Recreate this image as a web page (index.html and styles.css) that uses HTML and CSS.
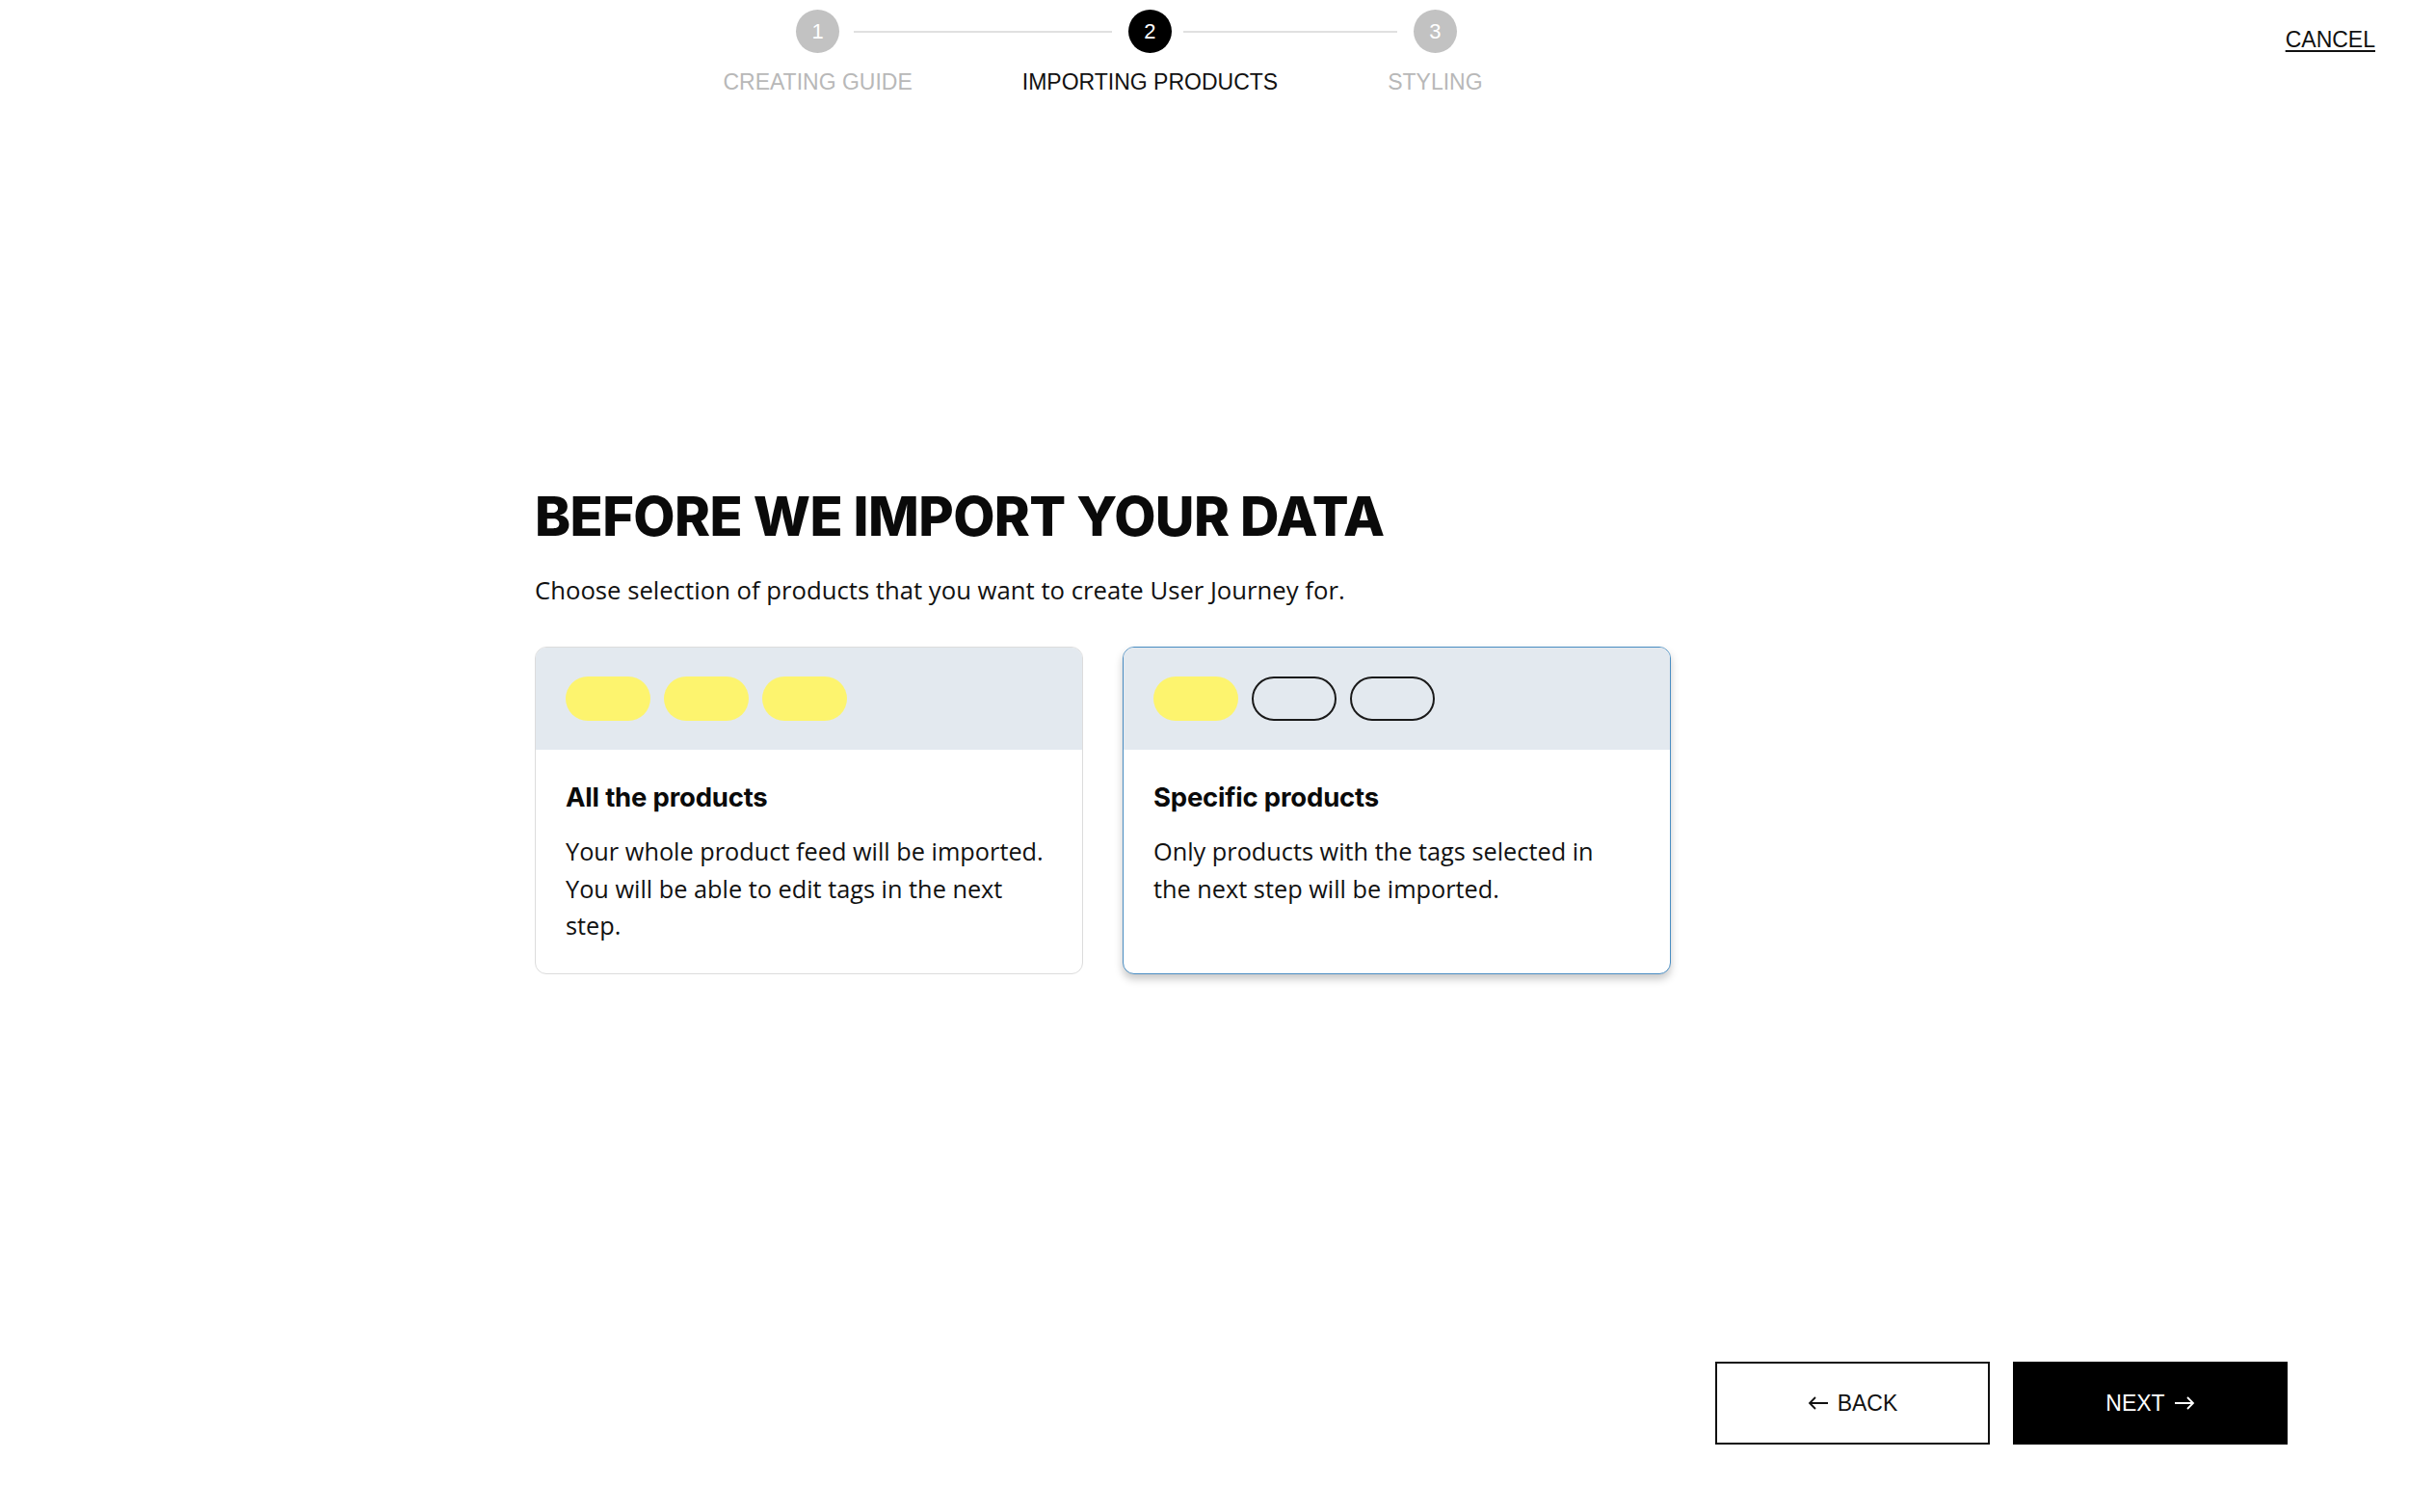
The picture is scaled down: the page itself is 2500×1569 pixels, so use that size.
FILE: index.html
```html
<!DOCTYPE html>
<html lang="en">
<head>
<meta charset="utf-8">
<title>Importing products</title>
<link rel="stylesheet" href="styles.css">
</head>
<body>
<header class="topbar">
  <div class="stepper-wrap">
    <ol class="stepper">
      <li class="step step--done">
        <span class="step-dot">1</span>
        <span class="step-label">CREATING GUIDE</span>
      </li>
      <li class="step step--active step--second">
        <span class="step-dot">2</span>
        <span class="step-label">IMPORTING PRODUCTS</span>
      </li>
      <li class="step step--third">
        <span class="step-dot">3</span>
        <span class="step-label">STYLING</span>
      </li>
    </ol>
  </div>
  <a class="cancel" href="#">CANCEL</a>
</header>

<main class="content">
  <h1 class="title">BEFORE WE IMPORT YOUR DATA</h1>
  <p class="subtitle">Choose selection of products that you want to create User Journey for.</p>
  <div class="options">
    <div class="option">
      <div class="option-head">
        <span class="pill pill--filled"></span>
        <span class="pill pill--filled"></span>
        <span class="pill pill--filled"></span>
      </div>
      <div class="option-body">
        <h2 class="option-title">All the products</h2>
        <p class="option-text">Your whole product feed will be imported. You will be able to edit tags in the next step.</p>
      </div>
    </div>
    <div class="option option--selected">
      <div class="option-head">
        <span class="pill pill--filled"></span>
        <span class="pill pill--outline"></span>
        <span class="pill pill--outline"></span>
      </div>
      <div class="option-body">
        <h2 class="option-title">Specific products</h2>
        <p class="option-text">Only products with the tags selected in the next step will be imported.</p>
      </div>
    </div>
  </div>
</main>

<footer class="actions">
  <button class="btn btn--ghost" type="button">
    <svg class="arrow" width="22" height="16" viewBox="0 0 22 16" aria-hidden="true"><path d="M21 8H2M8 2L2 8l6 6" fill="none" stroke="currentColor" stroke-width="1.8"/></svg>
    <span>BACK</span>
  </button>
  <button class="btn btn--solid" type="button">
    <span>NEXT</span>
    <svg class="arrow" width="22" height="16" viewBox="0 0 22 16" aria-hidden="true"><path d="M1 8h19M14 2l6 6-6 6" fill="none" stroke="currentColor" stroke-width="1.8"/></svg>
  </button>
</footer>
</body>
</html>
```

FILE: styles.css
```css
* { box-sizing: border-box; }

html, body { height: 100%; }

body {
  margin: 0;
  background: #ffffff;
  color: #111;
  font-family: "Liberation Sans", Arial, sans-serif;
  display: flex;
  flex-direction: column;
  min-height: 100vh;
}

/* ---------- top bar ---------- */
.topbar {
  display: flex;
  align-items: flex-start;
  padding-top: 10px;
}

.stepper-wrap {
  margin-left: 555px;
  width: 1179px;
  display: flex;
  justify-content: center;
}

.stepper {
  list-style: none;
  margin: 0;
  padding: 0;
  display: flex;
  gap: 114px;
}

.step {
  position: relative;
  display: flex;
  flex-direction: column;
  align-items: center;
}

.step-dot {
  position: relative;
  width: 45px;
  height: 45px;
  border-radius: 50%;
  background: #c2c2c2;
  color: #fff;
  font-size: 22px;
  display: flex;
  align-items: center;
  justify-content: center;
}

.step--active .step-dot { background: #000; }

.step--second .step-dot::before,
.step--third .step-dot::before {
  content: "";
  position: absolute;
  top: 22px;
  height: 2px;
  background: #e0e0e0;
  right: 62px;
}
.step--second .step-dot::before { width: 268px; }
.step--third .step-dot::before { width: 222px; }

.step-label {
  margin-top: 16px;
  font-size: 23px;
  line-height: 28px;
  color: #b8b8b8;
  white-space: nowrap;
}

.step--active .step-label { color: #111; }

.cancel {
  margin-left: auto;
  margin-right: 35px;
  margin-top: 17px;
  font-size: 23px;
  line-height: 28px;
  color: #111;
  text-decoration: underline;
  text-underline-offset: 3px;
}

/* ---------- content ---------- */
.content {
  margin-left: 555px;
  width: 1179px;
  padding-top: 409px;
}

.title {
  margin: 0;
  font-family: Inter, "Noto Sans", sans-serif;
  font-weight: 800;
  font-size: 56px;
  line-height: 56px;
  letter-spacing: -0.6px;
  color: #0a0a0a;
}

.subtitle {
  margin: 32px 0 0;
  font-family: "Open Sans", "Noto Sans", sans-serif;
  font-size: 25.7px;
  line-height: 34px;
  color: #111;
}

.options {
  margin-top: 41px;
  display: grid;
  grid-template-columns: 569px 569px;
  gap: 41px;
}

.option {
  border: 1.5px solid #dcdcdc;
  border-radius: 12px;
  overflow: hidden;
  background: #fff;
  display: flex;
  flex-direction: column;
}

.option--selected {
  border-color: #4a8dc2;
  box-shadow: 0 5px 8px rgba(0, 0, 0, 0.22);
}

.option-head {
  height: 106px;
  background: #e3e9ef;
  padding: 30px 0 0 31px;
  display: flex;
  gap: 14px;
}

.pill {
  width: 88px;
  height: 46px;
  border-radius: 23px;
}

.pill--filled { background: #fdf46e; }
.pill--outline { border: 2px solid #1a1a1a; }

.option-body {
  padding: 32px 28px 30px 31px;
}

.option-title {
  margin: 0;
  font-family: Inter, "Noto Sans", sans-serif;
  font-weight: 700;
  font-size: 27.5px;
  line-height: 34px;
  letter-spacing: -0.2px;
  color: #0a0a0a;
}

.option-text {
  margin: 20px 0 0;
  max-width: 498px;
  font-family: "Open Sans", "Noto Sans", sans-serif;
  font-size: 25.3px;
  line-height: 38.5px;
  color: #111;
}

/* ---------- footer ---------- */
.actions {
  margin-top: auto;
  display: flex;
  justify-content: flex-end;
  gap: 24px;
  padding: 0 126px 70px 0;
}

.btn {
  width: 285px;
  height: 86px;
  display: flex;
  align-items: center;
  justify-content: center;
  gap: 9px;
  font-family: "Liberation Sans", Arial, sans-serif;
  font-size: 23px;
  border-radius: 0;
  cursor: pointer;
}

.btn--ghost {
  background: #fff;
  color: #111;
  border: 2px solid #111;
}

.btn--solid {
  background: #000;
  color: #fff;
  border: 2px solid #000;
}

.arrow { display: block; }
```
